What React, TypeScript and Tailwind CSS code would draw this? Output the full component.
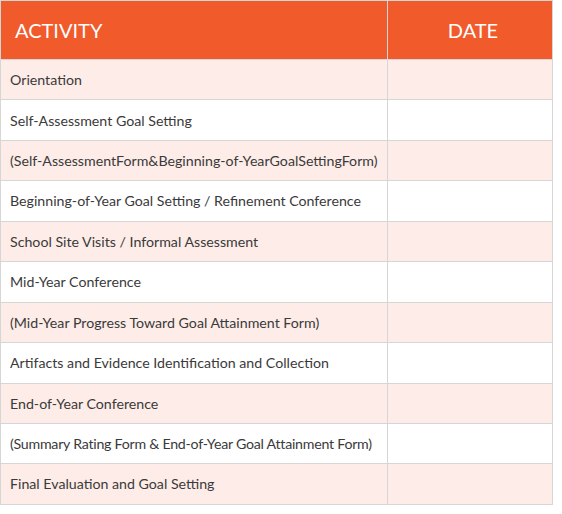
const rows = [
  "Orientation",
  "Self-Assessment Goal Setting",
  "(Self-AssessmentForm&Beginning-of-YearGoalSettingForm)",
  "Beginning-of-Year Goal Setting / Refinement Conference",
  "School Site Visits / Informal Assessment",
  "Mid-Year Conference",
  "(Mid-Year Progress Toward Goal Attainment Form)",
  "Artifacts and Evidence Identification and Collection",
  "End-of-Year Conference",
  "(Summary Rating Form & End-of-Year Goal Attainment Form)",
  "Final Evaluation and Goal Setting",
];

export default function App() {
  return (
    <div className="w-[562px] h-[514px] bg-white" style={{ fontFamily: "Lato, 'Open Sans', sans-serif" }}>
      <div className="w-[553px] border border-[#d6d6d6]">
        {/* Header */}
        <div className="grid grid-cols-[387px_1fr] h-[58px] bg-[#f15a2b] text-white text-[20px]">
          <div className="flex items-center pl-[14px] border-r border-[#d6d6d6]">ACTIVITY</div>
          <div className="flex items-center justify-center pl-[6px]">DATE</div>
        </div>
        {rows.map((r, i) => (
          <div
            key={i}
            className={`grid grid-cols-[387px_1fr] h-[40.45px] border-t border-[#d6d6d6] text-[14.2px] text-[#3a3a3a] ${
              i % 2 === 0 ? "bg-[#fdece7]" : "bg-white"
            }`}
          >
            <div
              className={`flex items-center pl-[9px] border-r border-[#d6d6d6] whitespace-nowrap ${
                i === 9 ? "tracking-[-0.25px]" : ""
              }`}
            >
              {r}
            </div>
            <div />
          </div>
        ))}
      </div>
    </div>
  );
}
